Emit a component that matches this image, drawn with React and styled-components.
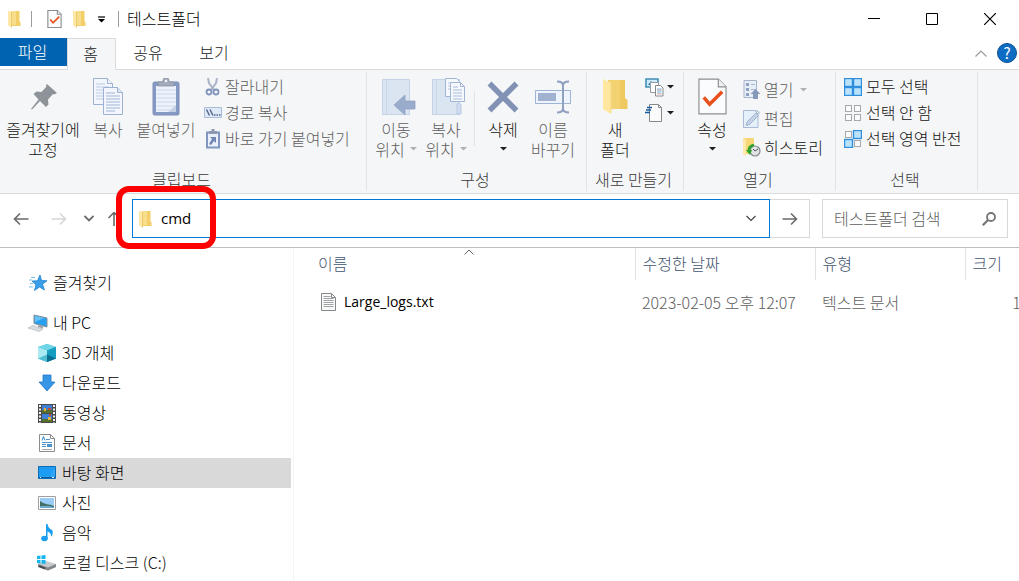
import React from "react";
import styled, { createGlobalStyle, css } from "styled-components";

const color = {
  ribbon: "#f5f6f7",
  line: "#dadbdc",
  split: "#e2e3e4",
  accent: "#0078d7",
  file: "#0063b1",
  text: "#000000",
  label: "#141414",
  muted: "#5e5e5e",
  caption: "#3a3a3a",
  header: "#3f546f",
};

const GlobalStyle = createGlobalStyle`
  * { box-sizing: border-box; }
  body {
    margin: 0;
    background: #fff;
    color: ${color.text};
    font: 16px/20px "Noto Sans CJK KR", "Noto Sans", sans-serif;
    font-weight: 300;
    overflow: hidden;
  }
  button, input { font: inherit; color: inherit; }
`;

const plainButton = css`
  border: 0;
  padding: 0;
  margin: 0;
  background: none;
  cursor: default;
`;

/* ---------- icons ---------- */

const Svg = styled.svg`
  display: block;
  flex: none;
  width: ${(p) => p.$w}px;
  height: ${(p) => p.$h}px;
`;

const Icon = ({ w, h, children }) => (
  <Svg $w={w} $h={h} viewBox={`0 0 ${w} ${h}`} fill="none" aria-hidden="true">
    {children}
  </Svg>
);

const SmallFolder = () => (
  <Icon w={13} h={18}>
    <path d="M3 1h8.500v10.500l1 .5v4H3z" fill="#f2cf68" />
    <path d="M3 1h5v14H3z" fill="#f8dd8a" />
    <path d="M0 .5l3.500 1.500v16L0 15z" fill="#ffe8a6" />
    <path d="M3.500 2v15.500" stroke="#eccb70" />
  </Icon>
);

const SheetCheck = ({ w, h }) => (
  <Svg $w={w} $h={h} viewBox="0 0 30 38" fill="none" aria-hidden="true">
    <path d="M1 1h20l8 8v28H1z" fill="#fbfcfd" stroke="#8c8f92" strokeWidth={w < 20 ? 2.4 : 1.2} />
    <path d="M21 1v8h8" fill="#eef0f2" stroke="#8c8f92" strokeWidth={w < 20 ? 2.4 : 1.2} />
    <path d="M6 20l6 7 13-13" stroke="#e9501c" strokeWidth="3.600" />
  </Svg>
);

const Caret = ({ tone = "#1e1e1e" }) => (
  <Icon w={7} h={4}>
    <path d="M0 0h7L3.500 3.500z" fill={tone} />
  </Icon>
);

const QuickCaret = () => (
  <Icon w={7} h={7}>
    <path d="M0 1h7" stroke="#000" strokeWidth="1.200" />
    <path d="M0 3h7L3.500 6.500z" fill="#000" />
  </Icon>
);

const Minimize = () => (
  <Icon w={12} h={12}><path d="M0 5.500h12" stroke="#000" /></Icon>
);
const Maximize = () => (
  <Icon w={12} h={12}><path d="M.5.5h11v11H.5z" stroke="#000" /></Icon>
);
const Close = () => (
  <Icon w={12} h={12}><path d="M0 0l12 12M12 0L0 12" stroke="#000" strokeWidth="1.200" /></Icon>
);
const ChevronUp = ({ tone = "#9a9a9a" }) => (
  <Icon w={12} h={7}><path d="M.5 6.500L6 1l5.500 5.500" stroke={tone} strokeWidth="1.200" /></Icon>
);
const SortUp = () => (
  <Icon w={10} h={6}><path d="M.5 5.500L5 1l4.500 4.500" stroke="#6a6a6a" /></Icon>
);

const Pin = () => (
  <Icon w={28} h={26}>
    <path d="M18 0l10 9-3 1.500-1-.5-5 5.500.5 5L17 23l-6-6-8 8.500L2 25l7.500-9.500L4.500 10l3-2.500 5 .5 5-5.500-.5-1z" fill="#8e9399" />
  </Icon>
);

const paperBlue = "#9db2d3";
const CopyPages = () => (
  <Icon w={31} h={37}>
    <g fill="#f3f7fd" stroke={paperBlue}>
      <path d="M.5.5h14l5 5v21H.5z" />
      <path d="M14.500.5v5h5" />
    </g>
    <path d="M3 6h9M3 9h13M3 12h13M3 15h13M3 18h13M3 21h13" stroke="#bccbe2" />
    <path d="M10.500 9.500h14l5 5v22h-19z" fill="#f3f7fd" stroke={paperBlue} />
    <path d="M24.500 9.500v5h5" fill="#dce6f4" stroke={paperBlue} />
    <path d="M13 15h9M13 18h14M13 21h14M13 24h14M13 27h14M13 30h14M13 33h9" stroke="#9fb4d6" />
  </Icon>
);

const Clipboard = () => (
  <Icon w={28} h={38}>
    <rect x="1" y="4" width="26" height="33" rx="1.500" fill="#8699c4" stroke="#7c8fb8" />
    <path d="M4 8h20v26H4z" fill="#eef3fb" />
    <path d="M4 12h20M4 16h20M4 20h20M4 24h20M4 28h20M4 32h20" stroke="#cbd7ea" />
    <path d="M24 27v7h-8z" fill="#c4d0e6" />
    <path d="M6 4h5V2a3 2 0 016 0v2h5v4H6z" fill="#a4abbb" stroke="#8991a5" strokeWidth=".8" />
    <circle cx="14" cy="3" r="1.300" fill="#eef1f6" />
  </Icon>
);

const Scissors = () => (
  <Icon w={18} h={18}>
    <path d="M4 0l1 5 5 7M13 0l-1 5-5 7" stroke="#a9b3c7" strokeWidth="2" />
    <circle cx="5" cy="14" r="2.500" stroke="#7f93bd" strokeWidth="1.800" />
    <circle cx="12" cy="14" r="2.500" stroke="#7f93bd" strokeWidth="1.800" />
  </Icon>
);

const PathIcon = () => (
  <Icon w={18} h={12}>
    <path d="M.5.5h17v10H.5z" fill="#dfe9f7" stroke="#a9bcd9" />
    <path d="M2.500 2.500l3 6M6 2.500l3 6" stroke="#4f6288" strokeWidth="1.400" />
    <path d="M10 8h1.500M12.500 8H14M15 8h1.500" stroke="#4f6288" strokeWidth="1.400" />
  </Icon>
);

const ShortcutPaste = () => (
  <Icon w={18} h={20}>
    <path d="M3 3.500h12v15H3z" fill="#e9f0fa" stroke="#8095bf" strokeWidth="2" />
    <path d="M5 2h2.500V0h3v2H13v3H5z" fill="#8d98b1" />
    <path d="M6 8h6v6l-2-2-3 4-2-1 3-5z" fill="#7187b3" />
  </Icon>
);

const FolderShape = () => (
  <>
    <path d="M.5 1.500h27v35H.5z" fill="#dbe5f2" stroke="#c4d3e7" />
    <path d="M4.500 2v34" stroke="#c9d7ea" />
  </>
);
const MoveTo = () => (
  <Icon w={40} h={38}>
    <g transform="translate(6 0)">
      <FolderShape />
      <path d="M12 27l11-10v6h10v8H23v6z" fill="#9aaccc" stroke="#8fa2c4" strokeWidth=".8" />
    </g>
  </Icon>
);
const CopyTo = () => (
  <Icon w={40} h={38}>
    <g transform="translate(6 0)">
      <FolderShape />
      <path d="M25 36V26q3-2 4 1v9z" fill="#d0dced" stroke="#b7c9e2" />
      <path d="M13.500.5h11l3 3v15h-14z" fill="#f5f9fe" stroke="#a1b5d5" />
      <path d="M16 5h6M16 8h8M16 11h8" stroke="#b5c5df" />
      <path d="M18.500 4.500h10l4 4v15h-14z" fill="#f5f9fe" stroke="#a1b5d5" />
      <path d="M28.500 4.500v4h4" stroke="#a1b5d5" />
      <path d="M21 9h5M21 12h9M21 15h9M21 18h9M21 21h9" stroke="#a8bbda" />
    </g>
  </Icon>
);
const Delete = () => (
  <Icon w={32} h={32}><path d="M2.500 2.500l27 27M29.500 2.500l-27 27" stroke="#8192b4" strokeWidth="5.500" /></Icon>
);
const Rename = () => (
  <Icon w={36} h={34}>
    <path d="M.5 10.500h35v13H.5z" fill="#edf4fd" stroke="#9fb3d3" />
    <path d="M3 13h18v8H3z" fill="#a1b2d0" />
    <path d="M22 1.500q6 0 6 4v23q0 4-6 4M34 1.500q-6 0-6 4v23q0 4 6 4" stroke="#8fa0c0" strokeWidth="2" />
  </Icon>
);

const BigFolder = () => (
  <Icon w={25} h={35}>
    <path d="M5 1h17v18l2.500 2v9H5z" fill="#eec95f" />
    <path d="M5 1h12v29H5z" fill="#f3d371" />
    <path d="M0 0l8 4v31l-8-5z" fill="#ffe7a0" />
    <path d="M8 4v30" stroke="#f6d984" />
  </Icon>
);
const NewItem = () => (
  <Icon w={19} h={19}>
    <path d="M1 1h12v8H1z" fill="#cfeafb" stroke="#3f8fb5" strokeWidth="1.600" />
    <path d="M3 7l3-4 3 4z" fill="#317a9a" />
    <path d="M5.500 4.500h8v10h-8z" fill="#fff" stroke="#9a9da0" />
    <path d="M10.500 7.500h5l2.500 2.500v8h-7.500z" fill="#fff" stroke="#85898c" />
    <path d="M12 11h4.500M12 13h4.500M12 15h4.500" stroke="#69b4e6" />
    <path d="M12 12h4.500M12 16h4.500" stroke="#ef9b8a" strokeWidth=".7" />
  </Icon>
);
const EasyAccess = () => (
  <Icon w={19} h={19}>
    <path d="M4.500.5h9l3 3v14h-12z" fill="#fbfbfb" stroke="#85898c" />
    <path d="M13.500.5v3h3" stroke="#85898c" />
    <path d="M2 3.500h5M1 6h5M0 8.500h5" stroke="#1b5c9e" strokeWidth="1.300" />
  </Icon>
);
const OpenIcon = () => (
  <Icon w={18} h={19}>
    <path d="M1 .5h12.500v17H1z" fill="#e8eff9" stroke="#a6b4cb" />
    <path d="M3 3h3v3H3zM3 8h3v3H3zM3 13h3v3H3z" fill="#8ea1c0" />
    <path d="M8 4.500h4M8 9.500h4" stroke="#a9b9d2" />
    <path d="M12.500 9l5 5H15v5h-5v-5H7.500z" fill="#8699b9" />
  </Icon>
);
const EditIcon = () => (
  <Icon w={18} h={18}>
    <path d="M.5.5h11l3.500 3.500v13.500H.5z" fill="#e6f0fb" stroke="#a8bad5" />
    <path d="M3 15.500L4 12 13 3l2.500 2.500-9 9z" fill="#c5d3e6" stroke="#94a9c8" strokeWidth=".8" />
    <path d="M12 1q4-1 4 3" stroke="#94a9c8" />
  </Icon>
);
const HistoryIcon = () => (
  <Icon w={18} h={19}>
    <path d="M0 0h11v16H0z" fill="#f6d675" />
    <path d="M0 0l3 2v16l-3-2z" fill="#ffe9a8" />
    <circle cx="12" cy="13" r="5" fill="#e1e3e4" stroke="#85888b" strokeWidth="1.200" />
    <path d="M12 13l3-2M12 13l-2-2" stroke="#555" />
    <path d="M11 7q-6 1-5 7" stroke="#29a32b" strokeWidth="2.500" />
    <path d="M3 12h6l-2 5z" fill="#29a32b" />
  </Icon>
);

const TILES = [[0, 0], [10, 0], [0, 10], [10, 10]];
const SelectTiles = ({ on }) => (
  <Icon w={18} h={18}>
    {TILES.map(([x, y], i) =>
      on.includes(i) ? (
        <rect key={i} x={x - (x ? 1 : 0) + 0.5} y={y - (y ? 1 : 0) + 0.5} width="8" height="8" fill="#b9e2fc" stroke="#2f8fdd" strokeWidth="1.400" />
      ) : (
        <rect key={i} x={x + (x ? 0.5 : 1.5)} y={y + (y ? 0.5 : 1.5)} width="6" height="6" fill="#fbfbfb" stroke="#a6a8aa" />
      )
    )}
  </Icon>
);

const NavArrow = ({ dir = 0, tone = "#6a6a6a" }) => (
  <Icon w={16} h={14}>
    <g transform={`rotate(${dir} 8 7)`}>
      <path d="M15.500 7H1.500M7 1.500L1.500 7 7 12.500" stroke={tone} strokeWidth="1.600" />
    </g>
  </Icon>
);
const ChevronDown = ({ tone = "#444", bold }) => (
  <Icon w={10} h={7}><path d="M.5 1L5 5.500 9.500 1" stroke={tone} strokeWidth={bold ? 1.8 : 1.2} /></Icon>
);
const SearchIcon = () => (
  <Icon w={14} h={14}>
    <circle cx="9" cy="5" r="4" stroke="#757575" strokeWidth="1.800" />
    <path d="M6 8L.8 13.200" stroke="#757575" strokeWidth="2.200" />
  </Icon>
);

const StarIcon = () => (
  <Icon w={18} h={16}>
    <path d="M11 0l1.500 5.500 5.500.2-4.500 3.500L15.500 15 10.500 12 5.500 15.500 7 9.800 3 6l5.500-.2z" fill="#3a9fe8" stroke="#1c83d2" strokeWidth=".8" />
    <path d="M2 2.500h4M0 5h3M1 8.500h3M0 12h4" stroke="#7cc0ef" />
  </Icon>
);
const PcIcon = () => (
  <Icon w={20} h={18}>
    <path d="M6 1l13 3v9L6 9.500z" fill="#27a0ef" stroke="#8b9198" />
    <path d="M7 2l9 2L7 8z" fill="#65c2f8" />
    <path d="M10 11l5 1.500v2l-5-1.500z" fill="#9da2a6" />
    <path d="M0 14l5-2.500 10 3.500-4 2.500z" fill="#d9dcde" stroke="#b9bdc0" strokeWidth=".7" />
  </Icon>
);
const CubeIcon = () => (
  <Icon w={18} h={18}>
    <path d="M9 0l9 3v11.500L9 18l-9-3.500V3z" fill="#35b9d2" />
    <path d="M9 0l9 3-9 3.500L0 3z" fill="#6fd6e8" />
    <path d="M0 3l9 3.500V18l-9-3.500z" fill="#a9eaf3" />
    <path d="M18 3L9 6.500V18l9-3.500z" fill="#179dbf" />
    <path d="M0 14.500l9-4V18z" fill="#4fbdd2" />
    <path d="M18 14.500l-9-4V18z" fill="#0b6f92" />
  </Icon>
);
const DownloadIcon = () => (
  <Icon w={18} h={18}><path d="M5 1h8v7h4l-8 9-8-9h4z" fill="#3795e6" stroke="#2077c9" strokeWidth=".8" /></Icon>
);
const VideoIcon = () => (
  <Icon w={18} h={19}>
    <path d="M0 0h18v19H0z" fill="#4b4b4b" />
    <path d="M2 1v18M16 1v18" stroke="#f3f3f3" strokeWidth="2" strokeDasharray="2 1.500" />
    <path d="M4 1h10v8H4zM4 10h10v8H4z" fill="#3e7fd6" />
    <path d="M4 6h10v3H4zM4 15h10v3H4z" fill="#53702d" />
    <path d="M6 4h2v3H6zM10 13h3v3h-3z" fill="#e5b33a" />
    <path d="M10 4h3v2h-3zM11 10h2v2h-2z" fill="#cb4638" />
  </Icon>
);
const DocIcon = () => (
  <Icon w={16} h={18}>
    <path d="M.5.5h11l4 4v13H.5z" fill="#fff" stroke="#8a8d90" />
    <path d="M11.500.5v4h4" stroke="#8a8d90" />
    <path d="M3 6.500l1.500-4L6 6.500" stroke="#2f84c6" />
    <path d="M7 5.500h4M3 8.500h10M3 10.500h4M3 12.500h4" stroke="#4c91c9" />
    <path d="M8 10h5v3H8z" fill="#4c91c9" />
    <path d="M3 15.500h10" stroke="#a4a7aa" />
  </Icon>
);
const DesktopIcon = () => (
  <Icon w={18} h={14}>
    <path d="M.5.5h17v12H.5z" fill="#1d9cf3" stroke="#0d6cb5" />
    <path d="M1 10h11L17 1v9.500H1z" fill="#40aef8" fillOpacity=".6" />
    <path d="M1 11.500h16" stroke="#0d5f9f" />
    <path d="M2 11.500h1M14 11.500h2" stroke="#f0f8ff" />
  </Icon>
);
const PhotoIcon = () => (
  <Icon w={18} h={14}>
    <path d="M.5.5h17v13H.5z" fill="#fff" stroke="#9da0a3" />
    <path d="M2 2h14v10H2z" fill="#9bccf5" />
    <path d="M2 5q3 3 8 3.500t6 2v1.500H2z" fill="#3f6c5d" />
    <path d="M2 10q7-1 14 1v1H2z" fill="#6fa8cf" />
  </Icon>
);
const MusicIcon = () => (
  <Icon w={12} h={18}>
    <path d="M5 0h1.500q.5 4 4.500 6 2 3-1 7 .5-4-3.500-5.500V14H5z" fill="#1b9df0" />
    <ellipse cx="3.500" cy="14.500" rx="3.300" ry="2.800" fill="#1b9df0" />
  </Icon>
);
const DiskIcon = () => (
  <Icon w={20} h={16}>
    <path d="M1 9l8-3 10 3v3l-8 3.500L1 12z" fill="#c7cacc" />
    <path d="M1 9l10 3.500 8-3.500v3l-8 3.500L1 12z" fill="#83878a" />
    <path d="M2 11l6 2.500" stroke="#3e4143" strokeWidth="1.500" />
    <path d="M0 1l3.500-.5V4H0zM4.500.4L8.500 0v4h-4zM0 5h3.500v3.500L0 8zM4.500 5h4v4l-4-.5z" fill="#16b4ec" />
  </Icon>
);
const TextFile = () => (
  <Icon w={15} h={18}>
    <path d="M.5.5h10l4 4v13H.5z" fill="#fafafa" stroke="#85888b" />
    <path d="M10.500.5v4h4" stroke="#85888b" />
    <path d="M2.500 3.500h7M2.500 5.500h10M2.500 7.500h10M2.500 9.500h10M2.500 11.500h10M2.500 13.500h10" stroke="#a0a2a4" />
  </Icon>
);

/* ---------- title bar ---------- */

const Window = styled.div`
  display: flex;
  flex-direction: column;
  min-height: 100vh;
`;
const TitleBar = styled.header`
  display: flex;
  align-items: center;
  height: 38px;
  padding-left: 8px;
`;
const QuickButton = styled.button`
  ${plainButton}
  display: flex;
  justify-content: center;
  width: ${(p) => p.$w}px;
`;
const BarSplit = styled.span`
  width: 1px;
  height: 16px;
  margin: ${(p) => p.$margin};
  background: #9c9c9c;
`;
const Title = styled.h1`
  flex: 1;
  margin: 0;
  padding-bottom: 2px;
  font-size: 16px;
  font-weight: inherit;
`;
const WindowButton = styled.button`
  ${plainButton}
  display: grid;
  place-items: center;
  width: 58px;
  height: 38px;
`;

/* ---------- tabs ---------- */

const TabBar = styled.nav`
  display: flex;
  align-items: flex-start;
  height: 32px;
  border-bottom: 1px solid ${color.line};
`;
const Tab = styled.button`
  ${plainButton}
  width: ${(p) => (p.$active ? 49 : 66)}px;
  height: ${(p) => (p.$active ? 32 : 30)}px;
  padding: 0 2px 2px 0;
  color: #222;
  ${(p) =>
    p.$active &&
    css`
      padding-bottom: 4px;
      background: ${color.ribbon};
      border: 1px solid ${color.line};
      border-bottom: 0;
    `}
`;
const FileTab = styled(Tab)`
  width: 67px;
  height: 28px;
  background: ${color.file};
  color: #fff;
`;
const TabTools = styled.div`
  display: flex;
  align-items: center;
  gap: 10px;
  height: 30px;
  margin-left: auto;
  padding-right: 2px;
`;
const HelpButton = styled.button`
  ${plainButton}
  width: 20px;
  height: 20px;
  border: 1px solid #0a4f93;
  border-radius: 50%;
  background: #0f6cc4;
  color: #fff;
  font-size: 15px;
  font-weight: 400;
  line-height: 18px;
`;

/* ---------- ribbon ---------- */

const Ribbon = styled.section`
  display: flex;
  padding: 2px 0;
  background: ${color.ribbon};
  border-bottom: 1px solid ${color.line};
`;
const Group = styled.section`
  display: flex;
  flex-direction: column;
  flex: none;
  width: ${(p) => p.$w}px;
  border-right: 1px solid ${color.split};
`;
const GroupBody = styled.div`
  display: flex;
  align-items: flex-start;
  height: 96px;
  padding-left: ${(p) => p.$pad || 0}px;
`;
const GroupCaption = styled.h2`
  margin: 0;
  padding: 0 3px 1px 0;
  font-size: 16px;
  font-weight: inherit;
  line-height: 22px;
  text-align: center;
  color: ${color.caption};
`;
const BigButton = styled.button`
  ${plainButton}
  flex: none;
  width: ${(p) => p.$w}px;
  color: ${(p) => (p.$muted ? color.muted : color.label)};
  white-space: nowrap;
`;
const BigIcon = styled.span`
  display: grid;
  place-items: center;
  height: 47px;
  padding-top: 2px;
`;
const Line = styled.span`
  display: flex;
  align-items: center;
  justify-content: center;
  gap: 5px;
  height: 20px;
`;
const BodySplit = styled.span`
  width: 1px;
  height: 55px;
  margin: 19px 3px 0;
  background: ${color.split};
`;
const Stack = styled.div`
  display: flex;
  flex-direction: column;
  padding: ${(p) => p.$top}px 0 0 ${(p) => p.$left || 0}px;
`;
const SmallButton = styled.button`
  ${plainButton}
  display: flex;
  align-items: center;
  gap: ${(p) => p.$gap || 3}px;
  height: ${(p) => p.$h || 26}px;
  color: ${(p) => (p.$muted ? color.muted : color.label)};
  white-space: nowrap;
`;
const SmallIcon = styled.span`
  display: grid;
  place-items: center;
  width: 18px;
`;
const Label = styled.span`
  padding-bottom: 2px;
`;
const CaretSlot = styled.span`
  padding-left: 4px;
`;

/* ---------- address bar ---------- */

const AddressRow = styled.div`
  display: flex;
  align-items: center;
  height: 54px;
  padding: 0 11px 4px 7px;
  border-bottom: 1px solid #bdbdbd;
`;
const NavButton = styled.button`
  ${plainButton}
  display: grid;
  place-items: center;
  flex: none;
  width: ${(p) => p.$w}px;
  height: 36px;
`;
const AddressBox = styled.div`
  display: flex;
  align-items: center;
  flex: 1;
  min-width: 0;
  height: 39px;
  padding-left: 6px;
  border: 1px solid ${color.accent};
`;
const TextInput = styled.input`
  flex: 1;
  min-width: 0;
  height: 28px;
  padding: 0 0 2px;
  border: 0;
  outline: 0;
  background: none;
  &::placeholder { color: ${color.muted}; opacity: 1; }
`;
const AddressInput = styled(TextInput)`
  margin-left: 9px;
  font-family: "Open Sans", "Noto Sans CJK KR", sans-serif;
  font-size: 15px;
  font-weight: 400;
`;
const GoButton = styled.button`
  ${plainButton}
  display: grid;
  place-items: center;
  width: 40px;
  height: 39px;
  border: 1px solid #d9d9d9;
  border-left: 0;
`;
const SearchBox = styled.label`
  display: flex;
  align-items: center;
  width: 186px;
  height: 39px;
  margin-left: 12px;
  padding: 0 11px;
  border: 1px solid #d9d9d9;
`;
const AddressHolder = styled.div`
  position: relative;
  display: flex;
  flex: 1;
  min-width: 0;
`;
const Highlight = styled.span`
  position: absolute;
  left: -16px;
  top: -13px;
  width: 100px;
  height: 63px;
  border: 6px solid #ff0000;
  border-radius: 13px;
  pointer-events: none;
`;

/* ---------- body ---------- */

const Main = styled.main`
  display: flex;
  flex: 1;
`;
const Sidebar = styled.nav`
  flex: none;
  width: 294px;
  padding: 20px 2px 0 0;
  border-right: 1px solid #f4f4f4;
`;
const TreeLink = styled.a`
  display: flex;
  align-items: center;
  gap: 5px;
  height: 30px;
  margin-bottom: ${(p) => (p.$spaced ? 10 : 0)}px;
  padding-left: ${(p) => (p.$nested ? 37 : 28)}px;
  background: ${(p) => (p.$active ? "#d9d9d9" : "none")};
  color: ${color.text};
  text-decoration: none;
`;
const TreeIcon = styled.span`
  display: grid;
  place-items: center;
  width: 20px;
`;
const Listing = styled.div`
  flex: 1;
  min-width: 0;
  overflow: hidden;
`;
const FileTable = styled.table`
  table-layout: fixed;
  width: 755px;
  border-collapse: collapse;
`;
const HeadCell = styled.th`
  position: relative;
  width: ${(p) => p.$w}px;
  height: 32px;
  padding: 0 0 2px ${(p) => p.$pad || 7}px;
  border-right: 1px solid #e2e2e2;
  text-align: left;
  font-weight: inherit;
  color: ${color.header};
`;
const HeadButton = styled.button`
  ${plainButton}
`;
const SortMark = styled.span`
  position: absolute;
  top: 1px;
  left: 50%;
`;
const Cell = styled.td`
  height: 46px;
  padding: 0 ${(p) => (p.$align ? 8 : 0)}px 2px ${(p) => p.$pad || 7}px;
  color: ${(p) => (p.$name ? color.text : color.muted)};
  text-align: ${(p) => p.$align || "left"};
  white-space: nowrap;
`;
const FileName = styled.span`
  display: flex;
  align-items: center;
  gap: 8px;
  font-family: "Open Sans", "Noto Sans CJK KR", sans-serif;
  font-size: 14px;
  font-weight: 400;
`;

const TREE = [
  { label: "즐겨찾기", icon: <StarIcon />, spaced: true },
  { label: "내 PC", icon: <PcIcon /> },
  { label: "3D 개체", icon: <CubeIcon />, nested: true },
  { label: "다운로드", icon: <DownloadIcon />, nested: true },
  { label: "동영상", icon: <VideoIcon />, nested: true },
  { label: "문서", icon: <DocIcon />, nested: true },
  { label: "바탕 화면", icon: <DesktopIcon />, nested: true, active: true },
  { label: "사진", icon: <PhotoIcon />, nested: true },
  { label: "음악", icon: <MusicIcon />, nested: true },
  { label: "로컬 디스크 (C:)", icon: <DiskIcon />, nested: true },
];

const Big = ({ w, icon, lines, caret, muted }) => (
  <BigButton $w={w} $muted={muted}>
    <BigIcon>{icon}</BigIcon>
    {lines.map((text, i) => (
      <Line key={text}>
        {text}
        {caret === "inline" && i === lines.length - 1 && <Caret tone="#b0b0b0" />}
      </Line>
    ))}
    {caret === "below" && <Line><Caret /></Line>}
  </BigButton>
);

const Small = ({ icon, label, caret, ...rest }) => (
  <SmallButton {...rest}>
    <SmallIcon>{icon}</SmallIcon>
    <Label>{label}</Label>
    {caret && <CaretSlot><Caret tone="#b0b0b0" /></CaretSlot>}
  </SmallButton>
);

export default function App() {
  return (
    <Window>
      <GlobalStyle />
      <TitleBar>
        <SmallFolder />
        <BarSplit $margin="0 10px" />
        <QuickButton $w={24} aria-label="속성"><SheetCheck w={15} h={18} /></QuickButton>
        <QuickButton $w={26} aria-label="새 폴더"><SmallFolder /></QuickButton>
        <QuickButton $w={19} aria-label="빠른 실행 도구 모음 사용자 지정"><QuickCaret /></QuickButton>
        <BarSplit $margin="0 8px 0 7px" />
        <Title>테스트폴더</Title>
        <WindowButton aria-label="최소화"><Minimize /></WindowButton>
        <WindowButton aria-label="최대화"><Maximize /></WindowButton>
        <WindowButton aria-label="닫기"><Close /></WindowButton>
      </TitleBar>

      <TabBar>
        <FileTab>파일</FileTab>
        <Tab $active>홈</Tab>
        <Tab>공유</Tab>
        <Tab>보기</Tab>
        <TabTools>
          <QuickButton $w={12} aria-label="리본 최소화"><ChevronUp /></QuickButton>
          <HelpButton aria-label="도움말">?</HelpButton>
        </TabTools>
      </TabBar>

      <Ribbon>
        <Group $w={367}>
          <GroupBody>
            <Big w={86} icon={<Pin />} lines={["즐겨찾기에", "고정"]} />
            <Big w={44} icon={<CopyPages />} lines={["복사"]} muted />
            <Big w={72} icon={<Clipboard />} lines={["붙여넣기"]} muted />
            <Stack $top={2} $left={2}>
              <Small $muted icon={<Scissors />} label="잘라내기" />
              <Small $muted icon={<PathIcon />} label="경로 복사" />
              <Small $muted icon={<ShortcutPaste />} label="바로 가기 붙여넣기" />
            </Stack>
          </GroupBody>
          <GroupCaption>클립보드</GroupCaption>
        </Group>
        <Group $w={220}>
          <GroupBody $pad={4}>
            <Big w={50} icon={<MoveTo />} lines={["이동", "위치"]} caret="inline" muted />
            <Big w={50} icon={<CopyTo />} lines={["복사", "위치"]} caret="inline" muted />
            <BodySplit />
            <Big w={50} icon={<Delete />} lines={["삭제"]} caret="below" />
            <Big w={50} icon={<Rename />} lines={["이름", "바꾸기"]} muted />
          </GroupBody>
          <GroupCaption>구성</GroupCaption>
        </Group>
        <Group $w={97}>
          <GroupBody $pad={1}>
            <Big w={54} icon={<BigFolder />} lines={["새", "폴더"]} />
            <Stack $top={2} $left={3}>
              <SmallButton aria-label="새 항목"><NewItem /><Caret /></SmallButton>
              <SmallButton aria-label="빠른 연결"><EasyAccess /><Caret /></SmallButton>
            </Stack>
          </GroupBody>
          <GroupCaption>새로 만들기</GroupCaption>
        </Group>
        <Group $w={152}>
          <GroupBody $pad={1}>
            <Big w={54} icon={<SheetCheck w={29} h={37} />} lines={["속성"]} caret="below" />
            <Stack $top={3} $left={4}>
              <Small $muted $h={29} icon={<OpenIcon />} label="열기" caret />
              <Small $muted $h={29} icon={<EditIcon />} label="편집" />
              <Small $h={29} icon={<HistoryIcon />} label="히스토리" />
            </Stack>
          </GroupBody>
          <GroupCaption>열기</GroupCaption>
        </Group>
        <Group $w={142}>
          <GroupBody $pad={8}>
            <Stack $top={2}>
              <Small $gap={4} icon={<SelectTiles on={[0, 1, 2, 3]} />} label="모두 선택" />
              <Small $gap={4} icon={<SelectTiles on={[]} />} label="선택 안 함" />
              <Small $gap={4} icon={<SelectTiles on={[1, 2]} />} label="선택 영역 반전" />
            </Stack>
          </GroupBody>
          <GroupCaption>선택</GroupCaption>
        </Group>
      </Ribbon>

      <AddressRow>
        <NavButton $w={28} aria-label="뒤로"><NavArrow /></NavButton>
        <NavButton $w={48} aria-label="앞으로"><NavArrow dir={180} tone="#d6d6d6" /></NavButton>
        <NavButton $w={12} aria-label="최근 위치"><ChevronDown tone="#6a6a6a" bold /></NavButton>
        <NavButton $w={37} aria-label="위로"><NavArrow dir={90} /></NavButton>
        <AddressHolder>
          <AddressBox>
            <SmallFolder />
            <AddressInput aria-label="주소" defaultValue="cmd" />
            <NavButton $w={36} aria-label="이전 위치"><ChevronDown /></NavButton>
          </AddressBox>
          <Highlight />
        </AddressHolder>
        <GoButton aria-label="이동"><NavArrow dir={180} /></GoButton>
        <SearchBox>
          <TextInput aria-label="테스트폴더 검색" placeholder="테스트폴더 검색" />
          <SearchIcon />
        </SearchBox>
      </AddressRow>

      <Main>
        <Sidebar>
          {TREE.map((item) => (
            <TreeLink key={item.label} href="#" $nested={item.nested} $active={item.active} $spaced={item.spaced}>
              <TreeIcon>{item.icon}</TreeIcon>
              <Label>{item.label}</Label>
            </TreeLink>
          ))}
        </Sidebar>
        <Listing>
          <FileTable>
            <thead>
              <tr>
                <HeadCell $w={341} $pad={24}>
                  <HeadButton>이름</HeadButton>
                  <SortMark><SortUp /></SortMark>
                </HeadCell>
                <HeadCell $w={180}><HeadButton>수정한 날짜</HeadButton></HeadCell>
                <HeadCell $w={150}><HeadButton>유형</HeadButton></HeadCell>
                <HeadCell $w={84}><HeadButton>크기</HeadButton></HeadCell>
              </tr>
            </thead>
            <tbody>
              <tr>
                <Cell $name $pad={27}><FileName><TextFile />Large_logs.txt</FileName></Cell>
                <Cell>2023-02-05 오후 12:07</Cell>
                <Cell>텍스트 문서</Cell>
                <Cell $align="right">1KB</Cell>
              </tr>
            </tbody>
          </FileTable>
        </Listing>
      </Main>
    </Window>
  );
}
